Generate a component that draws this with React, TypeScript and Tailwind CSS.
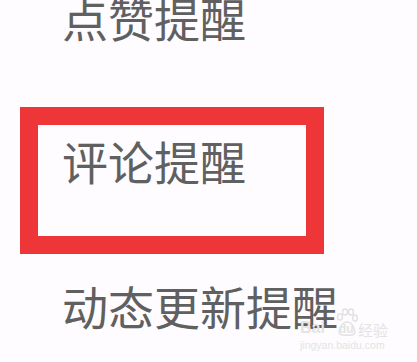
export default function App() {
  const font = { fontFamily: '"Noto Sans CJK SC", "Noto Sans", sans-serif' };
  const latin = { fontFamily: '"Liberation Sans", sans-serif' };
  return (
    <div
      className="w-[417px] h-[362px] overflow-hidden bg-[#fefcfe] relative flex flex-col text-[#606060] text-[46px] leading-[46px]"
      style={font}
    >
      <div className="pl-[62px] mt-[-6px]">点赞提醒</div>
      <div className="ml-[20px] mt-[67px] w-[304px] h-[147px] border-[18px] border-[#ee3538] pl-[24px] pt-[12px]">
        评论提醒
      </div>
      <div className="pl-[62px] mt-[28px]">动态更新提醒</div>
      <div className="absolute left-[300px] top-[306px] w-[92px] h-[46px] text-[#e4e4e4] leading-none select-none pointer-events-none">
        <svg className="absolute left-[36px] top-[2px]" width="22" height="30" viewBox="0 0 22 30" fill="none" stroke="#e2e2e2" strokeWidth="1.5">
          <ellipse cx="4" cy="9" rx="2.5" ry="3" />
          <ellipse cx="9" cy="4" rx="2.5" ry="3" />
          <ellipse cx="15" cy="4" rx="2.5" ry="3" />
          <ellipse cx="19" cy="10" rx="2.3" ry="3" />
          <path d="M3 24 Q5 14 11 14 Q17 14 19 24 Q19 28 11 27 Q3 28 3 24 Z" />
        </svg>
        <div className="absolute left-0 top-[14px] text-[16px] font-bold" style={latin}>Bai</div>
        <div className="absolute left-[39px] top-[17px] text-[12px] font-bold" style={latin}>du</div>
        <div className="absolute left-[58px] top-[16px] text-[15px]" style={font}>经验</div>
        <div className="absolute left-0 top-[34px] text-[10.5px]" style={latin}>jingyan.baidu.com</div>
      </div>
    </div>
  );
}
